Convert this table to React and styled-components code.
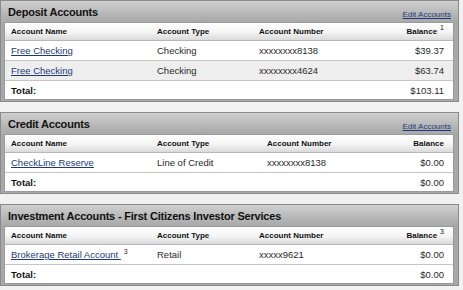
import React from 'react';
import styled, { createGlobalStyle } from 'styled-components';

const GlobalStyle = createGlobalStyle`
  body {
    margin: 0;
    background: #f1f1f1;
    font-family: 'Liberation Sans', Arial, sans-serif;
    color: #222;
  }
`;

const Page = styled.div`
  width: 459px;
`;

const Panel = styled.section`
  border: 1px solid #8a8a8a;
  background: linear-gradient(#d0d0d0, #b4b4b4 14px, #a8a8a8 22px, #a8a8a8);
  padding: 0 4px 1px 3px;
  margin-bottom: 10px;
`;

const PanelHeader = styled.div`
  height: 21px;
  display: flex;
  align-items: center;
  justify-content: space-between;
  padding: 0 3px 0 4px;
`;

const Title = styled.h2`
  margin: 0;
  font-size: 11px;
  font-weight: bold;
  letter-spacing: -0.2px;
  color: #111;
`;

const EditLink = styled.a`
  font-size: 8px;
  color: #1b3a78;
  text-decoration: underline;
  padding-top: 5px;
  cursor: pointer;
`;

const Inner = styled.div`
  background: #fff;
  border: 1px solid #9a9a9a;
`;

const Row = styled.div`
  display: grid;
  grid-template-columns: ${p => p.$cols};
  align-items: center;
  height: ${p => (p.$head ? '17px' : p.$total ? '18px' : '19px')};
  padding: 0 9px 0 6px;
  border-bottom: ${p => (p.$total ? 'none' : p.$head ? '1px solid #b8b8b8' : '1px solid #c6c6c6')};
  background: ${p =>
    p.$head ? 'linear-gradient(#ffffff, #f4f4f4 55%, #dadada)' : p.$alt ? '#eeeeee' : '#ffffff'};
  font-size: ${p => (p.$head ? '8px' : '9.5px')};
  font-weight: ${p => (p.$head ? 'bold' : 'normal')};
  color: ${p => (p.$head ? '#111' : '#2a2a2a')};
`;

const Right = styled.span`
  text-align: right;
  white-space: nowrap;
`;

const TotalLabel = styled.span`
  font-weight: bold;
  color: #111;
`;

const AcctLink = styled.a`
  color: #1b3a78;
  text-decoration: underline;
  cursor: pointer;
`;

const Sup = styled.sup`
  font-size: 7px;
  font-weight: normal;
  line-height: 0;
  margin-left: 3px;
  vertical-align: 4px;
`;

const panels = [
  {
    title: 'Deposit Accounts',
    edit: true,
    cols: '146px 102px 1fr auto',
    balanceNote: '1',
    rows: [
      { name: 'Free Checking', type: 'Checking', number: 'xxxxxxxx8138', balance: '$39.37' },
      { name: 'Free Checking', type: 'Checking', number: 'xxxxxxxx4624', balance: '$63.74' },
    ],
    total: '$103.11',
  },
  {
    title: 'Credit Accounts',
    edit: true,
    cols: '146px 110px 1fr auto',
    rows: [
      { name: 'CheckLine Reserve', type: 'Line of Credit', number: 'xxxxxxxx8138', balance: '$0.00' },
    ],
    total: '$0.00',
  },
  {
    title: 'Investment Accounts - First Citizens Investor Services',
    cols: '146px 102px 1fr auto',
    balanceNote: '3',
    rows: [
      { name: 'Brokerage Retail Account ', note: '3', type: 'Retail', number: 'xxxxx9621', balance: '$0.00' },
    ],
    total: '$0.00',
  },
];

const AccountPanel = ({ data }) => (
  <Panel>
    <PanelHeader>
      <Title>{data.title}</Title>
      {data.edit && <EditLink>Edit Accounts</EditLink>}
    </PanelHeader>
    <Inner>
      <Row $head $cols={data.cols}>
        <span>Account Name</span>
        <span>Account Type</span>
        <span>Account Number</span>
        <Right>
          Balance{data.balanceNote && <Sup>{data.balanceNote}</Sup>}
        </Right>
      </Row>
      {data.rows.map((r, i) => (
        <Row key={i} $cols={data.cols} $alt={i % 2 === 1}>
          <span>
            <AcctLink>{r.name}</AcctLink>
            {r.note && <Sup>{r.note}</Sup>}
          </span>
          <span>{r.type}</span>
          <span>{r.number}</span>
          <Right>{r.balance}</Right>
        </Row>
      ))}
      <Row $total $cols={data.cols}>
        <TotalLabel>Total:</TotalLabel>
        <span />
        <span />
        <Right>{data.total}</Right>
      </Row>
    </Inner>
  </Panel>
);

export default function App() {
  return (
    <Page>
      <GlobalStyle />
      {panels.map(p => (
        <AccountPanel key={p.title} data={p} />
      ))}
    </Page>
  );
}
